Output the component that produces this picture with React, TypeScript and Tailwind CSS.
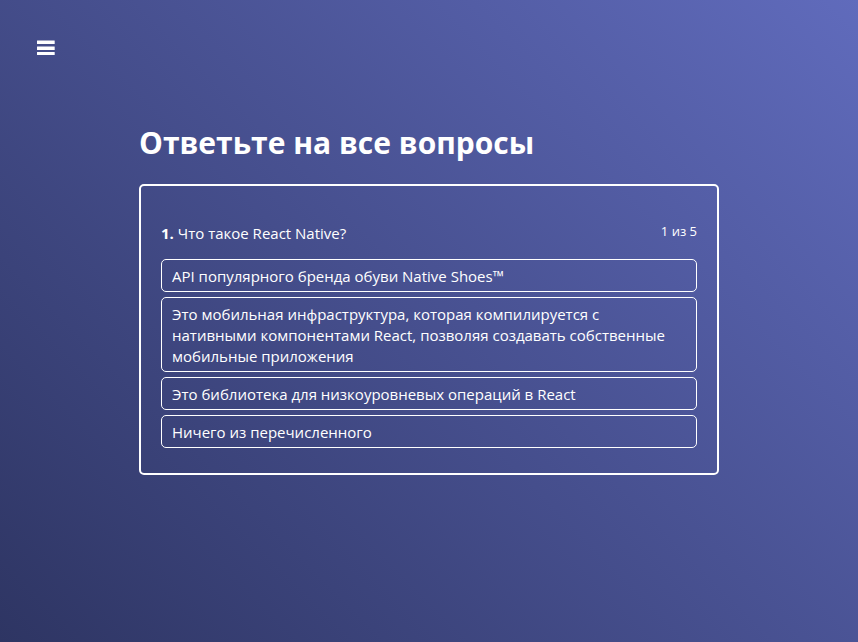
const answers = [
  'API популярного бренда обуви Native Shoes™',
  'Это мобильная инфраструктура, которая компилируется с нативными компонентами React, позволяя создавать собственные мобильные приложения',
  'Это библиотека для низкоуровневых операций в React',
  'Ничего из перечисленного',
];

export default function App() {
  return (
    <div className="relative min-h-screen bg-linear-[45deg,#2e3563,#606bbc] font-['Open_Sans','Noto_Sans',sans-serif] text-white">
      <button type="button" aria-label="Меню" className="absolute top-10 left-[37px]">
        <svg className="block h-[15px] w-[18px]" viewBox="0 0 18 15" fill="currentColor" aria-hidden="true">
          <rect y="0.5" width="17.7" height="3.5" rx="0.3" />
          <rect y="6.5" width="17.7" height="3.5" rx="0.3" />
          <rect y="12" width="17.7" height="3" rx="0.3" />
        </svg>
      </button>
      <main className="mx-auto flex min-h-screen w-full max-w-[580px] flex-col justify-center pb-[46px]">
        <h1 className="mb-5 text-[30px] leading-[42px] font-bold">Ответьте на все вопросы</h1>
        <section className="rounded-[5px] border-2 border-white px-5 pt-[37px] pb-[25px]">
          <div className="mb-[15px] flex justify-between">
            <p className="text-[15px] leading-[21px]">
              <strong>1.</strong> Что такое React Native?
            </p>
            <small className="text-[13px] leading-4">1 из 5</small>
          </div>
          <ul className="flex flex-col gap-[5px]">
            {answers.map((answer) => (
              <li key={answer}>
                <button type="button" className="block w-full rounded-[5px] border border-white px-2.5 pt-[6px] pb-1 text-left text-[15px] leading-[21px]">
                  {answer}
                </button>
              </li>
            ))}
          </ul>
        </section>
      </main>
    </div>
  );
}
